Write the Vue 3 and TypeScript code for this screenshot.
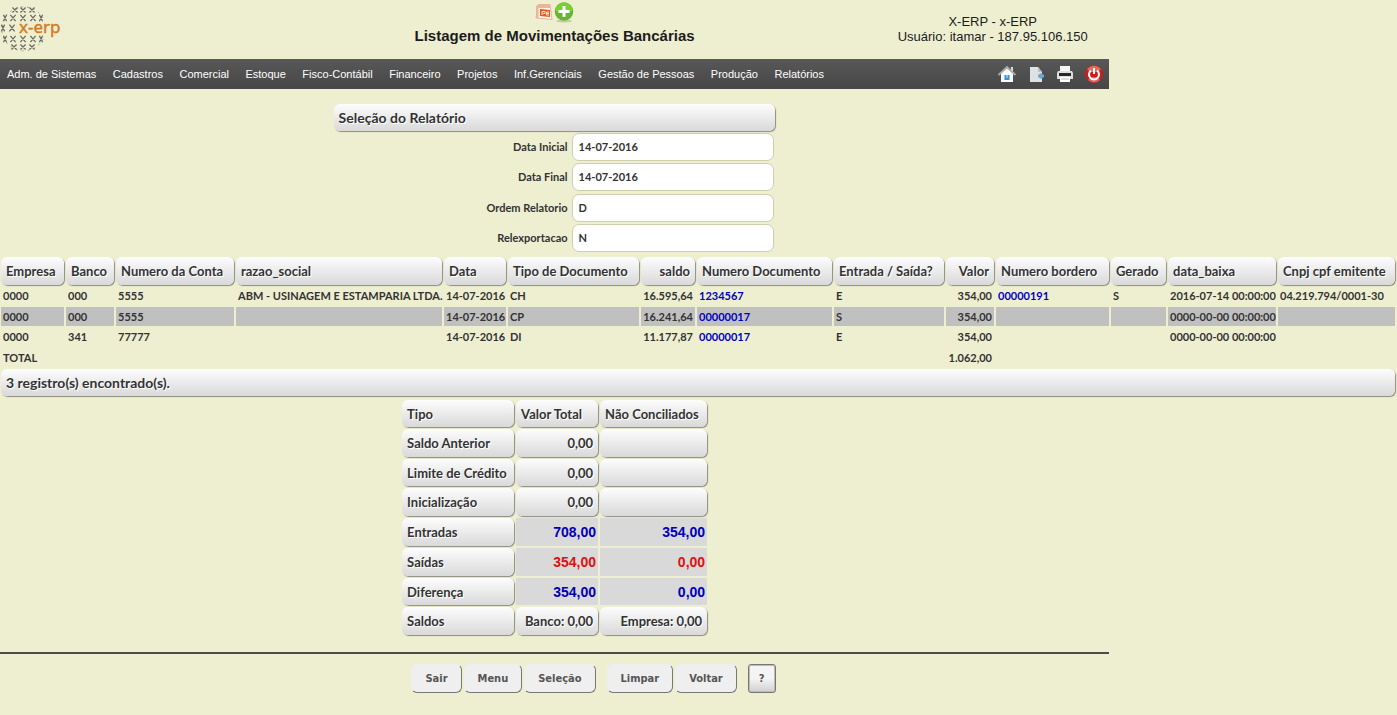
<script setup lang="ts">
interface Field { id: string; label: string; value: string }
interface Column { label: string; width: number; right?: boolean; link?: boolean }
interface Summary { label: string; total: string; pending: string; kind: string }

const menu: string[] = ['Adm. de Sistemas', 'Cadastros', 'Comercial', 'Estoque', 'Fisco-Contábil', 'Financeiro', 'Projetos', 'Inf.Gerenciais', 'Gestão de Pessoas', 'Produção', 'Relatórios']

const fields: Field[] = [
  { id: 'data-inicial', label: 'Data Inicial', value: '14-07-2016' },
  { id: 'data-final', label: 'Data Final', value: '14-07-2016' },
  { id: 'ordem', label: 'Ordem Relatorio', value: 'D' },
  { id: 'relexportacao', label: 'Relexportacao', value: 'N' },
]

const columns: Column[] = [
  { label: 'Empresa', width: 63 },
  { label: 'Banco', width: 48 },
  { label: 'Numero da Conta', width: 118 },
  { label: 'razao_social', width: 206 },
  { label: 'Data', width: 62 },
  { label: 'Tipo de Documento', width: 131 },
  { label: 'saldo', width: 54, right: true },
  { label: 'Numero Documento', width: 135, link: true },
  { label: 'Entrada / Saída?', width: 110 },
  { label: 'Valor', width: 48, right: true },
  { label: 'Numero bordero', width: 113, link: true },
  { label: 'Gerado', width: 55 },
  { label: 'data_baixa', width: 108 },
  { label: 'Cnpj cpf emitente', width: 117 },
]

const rows: string[][] = [
  ['0000', '000', '5555', 'ABM - USINAGEM E ESTAMPARIA LTDA.', '14-07-2016', 'CH', '16.595,64', '1234567', 'E', '354,00', '00000191', 'S', '2016-07-14 00:00:00', '04.219.794/0001-30'],
  ['0000', '000', '5555', '', '14-07-2016', 'CP', '16.241,64', '00000017', 'S', '354,00', '', '', '0000-00-00 00:00:00', ''],
  ['0000', '341', '77777', '', '14-07-2016', 'DI', '11.177,87', '00000017', 'E', '354,00', '', '', '0000-00-00 00:00:00', ''],
  ['TOTAL', '', '', '', '', '', '', '', '', '1.062,00', '', '', '', ''],
]

const summary: Summary[] = [
  { label: 'Saldo Anterior', total: '0,00', pending: '', kind: 'box' },
  { label: 'Limite de Crédito', total: '0,00', pending: '', kind: 'box' },
  { label: 'Inicialização', total: '0,00', pending: '', kind: 'box' },
  { label: 'Entradas', total: '708,00', pending: '354,00', kind: 'amount blue' },
  { label: 'Saídas', total: '354,00', pending: '0,00', kind: 'amount red' },
  { label: 'Diferença', total: '354,00', pending: '0,00', kind: 'amount blue' },
  { label: 'Saldos', total: 'Banco: 0,00', pending: 'Empresa: 0,00', kind: 'box' },
]

const navigation: string[] = ['Sair', 'Menu', 'Seleção']
const actions: string[] = ['Limpar', 'Voltar']

// Small crosses laid on a sphere: rows of [y, half height, x positions]
const globe: [number, number, number[]][] = [
  [6, 2.5, [15, 23, 32]],
  [14, 3.2, [5, 13, 23, 33, 41]],
  [24, 3.4, [3, 12]],
  [35, 3.2, [5, 13, 23, 33, 41]],
  [43, 2.5, [14, 23, 32]],
]
const crosses = globe.flatMap(([y, h, xs]) => xs.map((x) => {
  const w = Math.abs(x - 23) > 14 ? 1.6 : 2.6
  return `M${x - w} ${y - h}L${x + w} ${y + h}M${x + w} ${y - h}L${x - w} ${y + h}`
})).join('')
</script>

<template>
  <div class="page">
    <header class="top">
      <div class="logo">
        <svg width="64" height="50" viewBox="0 0 64 50" role="img" aria-label="x-erp">
          <path d="M43 14A22 22 0 0 0 6 12A22 22 0 0 0 6 38A22 22 0 0 0 44 33" fill="none" stroke="#a3a396" stroke-dasharray="2 4" />
          <path :d="crosses" stroke="#6b6b64" stroke-width="1.3" fill="none" />
          <text x="19" y="29" class="brand">x-erp</text>
        </svg>
      </div>
      <div class="heading">
        <div class="shortcuts">
          <a href="#" aria-label="Exportar">
            <svg width="18" height="20" viewBox="0 0 18 20">
              <path d="M3 3.500L15 3.500L17 18.500L1 17Z" fill="#fff4ea" stroke="#e9b49c" />
              <path d="M1 5V17H3.500V7H15V4H3Z" fill="#efb398" />
              <path d="M5 8L15 9V16L5 15Z" fill="#dc5b25" />
              <path d="M7 14V10.500H10V12.500H8M14 11H11.500V14H14M11.500 12.500H14" stroke="#ffe5d3" fill="none" />
            </svg>
          </a>
          <a href="#" aria-label="Adicionar">
            <svg width="20" height="22" viewBox="0 0 20 22">
              <ellipse cx="10" cy="20" rx="8" ry="1.5" fill="#c7c9ac" />
              <circle cx="10" cy="10.500" r="9.300" fill="#65b82e" />
              <path d="M1.500 10A8.500 8.500 0 0 1 18.500 10Q10 14 1.500 10Z" fill="#7bce30" />
              <path d="M10 5V16M4.500 10.500H15.500" stroke="#fff" stroke-width="3" />
            </svg>
          </a>
        </div>
        <h1>Listagem de Movimentações Bancárias</h1>
      </div>
      <div class="user">
        <div>X-ERP - x-ERP</div>
        <div>Usuário: itamar - 187.95.106.150</div>
      </div>
    </header>

    <nav class="bar">
      <ul class="menu">
        <li v-for="item in menu" :key="item"><a href="#">{{ item }}</a></li>
      </ul>
      <div class="tools">
        <a href="#" aria-label="Início">
          <svg width="20" height="20" viewBox="0 0 20 20">
            <path d="M14 3H16V8H14Z" fill="#ddd" />
            <path d="M4 9L10 4L16 9V18H4Z" fill="#fafafa" />
            <path d="M1.500 11L10 3L18.500 11" fill="none" stroke="#a8aaac" stroke-width="1.800" />
            <path d="M7.500 11H12.500V16H7.500Z" fill="#3b8ed0" />
            <path d="M10 11V14" stroke="#cce8fb" />
          </svg>
        </a>
        <a href="#" aria-label="Novo documento">
          <svg width="20" height="20" viewBox="0 0 20 20">
            <path d="M4 3H12L16 8V18H4Z" fill="#dfe2e4" />
            <path d="M12 3V8H16Z" fill="#b9bec2" />
            <path d="M12 11L15 9L18 11V13L15 15L12 13Z" fill="#6ba7d0" />
          </svg>
        </a>
        <a href="#" aria-label="Imprimir">
          <svg width="20" height="20" viewBox="0 0 20 20">
            <rect x="5" y="2" width="10" height="6" fill="#f7f7f7" />
            <path d="M3 7H17L18 9V15H2V9Z" fill="#dedede" />
            <path d="M4 9H16V12H4Z" fill="#252729" />
            <path d="M5 13H15V18H5Z" fill="#fff" />
            <path d="M6 15H14" stroke="#bbb" />
          </svg>
        </a>
        <a href="#" aria-label="Desligar">
          <svg width="20" height="20" viewBox="0 0 20 20">
            <circle cx="10" cy="10" r="9" fill="#c7201c" />
            <path d="M3 5Q10 -2 17 5L14 8H6Z" fill="#e36a62" />
            <path d="M4 16Q10 21 16 16L13 13H7Z" fill="#e0605a" />
            <path d="M7 6.500A5 5 0 1 0 13 6.500M10 4V10" fill="none" stroke="#fff" stroke-width="2" />
          </svg>
        </a>
      </div>
    </nav>

    <form class="selection" @submit.prevent>
      <h2 class="box">Seleção do Relatório</h2>
      <div v-for="field in fields" :key="field.id" class="field">
        <label :for="field.id">{{ field.label }}</label>
        <input :id="field.id" type="text" :value="field.value" />
      </div>
    </form>

    <table class="listing">
      <colgroup>
        <col v-for="column in columns" :key="column.label" :style="{ width: column.width + 'px' }" />
      </colgroup>
      <thead>
        <tr>
          <th v-for="column in columns" :key="column.label" class="box" :class="{ right: column.right }">{{ column.label }}</th>
        </tr>
      </thead>
      <tbody>
        <tr v-for="(row, r) in rows" :key="r" :class="{ shaded: r === 1 }">
          <td v-for="(cell, c) in row" :key="c" :class="{ right: columns[c].right }">
            <a v-if="columns[c].link && cell" href="#">{{ cell }}</a>
            <template v-else>{{ cell }}</template>
          </td>
        </tr>
      </tbody>
      <tfoot>
        <tr><td class="box" :colspan="columns.length">3 registro(s) encontrado(s).</td></tr>
      </tfoot>
    </table>

    <div class="lower">
      <table class="summary">
        <colgroup><col class="kind" /><col class="total" /><col class="pending" /></colgroup>
        <tbody>
          <tr>
            <th class="box">Tipo</th>
            <th class="box">Valor Total</th>
            <th class="box">Não Conciliados</th>
          </tr>
          <tr v-for="line in summary" :key="line.label">
            <th class="box">{{ line.label }}</th>
            <td class="right" :class="line.kind">{{ line.total }}</td>
            <td class="right" :class="line.kind">{{ line.pending }}</td>
          </tr>
        </tbody>
      </table>
    </div>

    <footer class="commands">
      <div class="group">
        <button v-for="name in navigation" :key="name" type="button">{{ name }}</button>
      </div>
      <div class="group">
        <button v-for="name in actions" :key="name" type="button">{{ name }}</button>
      </div>
      <button type="button" class="help">?</button>
    </footer>
  </div>
</template>

<style>
body {
  margin: 0;
  background: #eeefd1;
}
</style>

<style scoped>
.page {
  color: #333;
  font: bold 11px/18px Lato, "Liberation Sans", sans-serif;
}
a {
  text-decoration: none;
}
.top,
.bar,
.lower,
.commands {
  width: 79.4%;
  box-sizing: border-box;
}
.top {
  display: grid;
  grid-template-columns: 21% 58% 21%;
  height: 59px;
  color: #1c1c1c;
  font-family: "Liberation Sans", Arial, sans-serif;
}
.logo {
  padding-top: 4px;
}
.brand {
  fill: #d47a20;
  stroke: #d47a20;
  stroke-width: 0.4px;
  font: 17px "Noto Sans", sans-serif;
}
.heading {
  text-align: center;
}
.shortcuts {
  display: flex;
  justify-content: center;
  gap: 1px;
  height: 24px;
  padding-top: 1px;
  box-sizing: border-box;
}
h1 {
  margin: 0;
  font-size: 15px;
  line-height: 24px;
}
.user {
  padding-top: 14px;
  font-size: 13px;
  font-weight: normal;
  line-height: 15px;
  text-align: center;
  white-space: nowrap;
}
.bar {
  display: flex;
  justify-content: space-between;
  align-items: center;
  height: 30px;
  padding: 0 5px 0 7px;
  background: linear-gradient(#585858, #464646);
}
.menu {
  display: flex;
  justify-content: space-between;
  width: 817px;
  margin: 0;
  padding: 0;
  list-style: none;
  font: 11px/30px "Liberation Sans", Arial, sans-serif;
}
.menu a {
  color: #fff;
}
.tools {
  display: flex;
  gap: 9px;
}
.tools a,
.shortcuts a,
svg {
  display: block;
}
.box {
  border-radius: 6px;
  background: linear-gradient(#fdfdfd, #d9d9d9);
  box-shadow: 1px 1px 1px #8c8c80;
  color: #333;
  font-size: 13px;
  font-weight: bold;
  text-shadow: 1px 1px 0 #fff;
}
.selection {
  width: 441px;
  margin: 15px auto 0 calc(39.7% - 221px);
}
h2.box {
  height: 27px;
  margin: 0 0 2px;
  padding-left: 5px;
  font-size: 14px;
  line-height: 27px;
}
.field {
  display: flex;
  justify-content: flex-end;
  align-items: center;
  gap: 4px;
  height: 28px;
  margin: 0 1px 3px 0;
}
.field:nth-child(even) {
  margin-bottom: 2px;
}
.field input {
  width: 202px;
  height: 28px;
  box-sizing: border-box;
  padding: 0 6px 2px;
  border: 1px solid #cfcfb0;
  border-radius: 7px;
  background: #fff;
  color: #333;
  font: inherit;
}
table {
  border-collapse: separate;
  border-spacing: 2px;
  table-layout: fixed;
}
th,
td {
  padding: 0 2px;
  text-align: left;
  white-space: nowrap;
}
.listing {
  width: calc(100% + 1px);
  margin: 1px 0 0 -1px;
}
th.box,
td.box {
  height: 27px;
  padding: 0 5px;
}
.listing thead th.box {
  height: 28px;
}
.listing tfoot td.box {
  font-size: 14px;
}
.listing tbody tr {
  height: 18px;
}
.listing tbody tr:nth-child(even) {
  height: 19px;
}
.listing a {
  color: #0000c0;
}
.shaded td {
  background: #c0c0c0;
}
.right {
  text-align: right;
}
.lower {
  padding-bottom: 15px;
  border-bottom: 2px solid #4b4b4b;
}
.summary {
  width: 309px;
  margin: 0 auto;
}
.kind {
  width: 112px;
}
.total {
  width: 82px;
}
.pending {
  width: 107px;
}
.summary tr:nth-child(even) .box,
.summary tr:nth-child(even) td,
.summary tr:nth-child(5) .box {
  height: 28px;
}
.amount {
  background: #d9d9d9;
  font: bold 14px "Liberation Sans", Arial, sans-serif;
}
.blue {
  color: #0000b8;
}
.red {
  color: #e01010;
}
.commands {
  display: flex;
  justify-content: center;
  gap: 11px;
  padding: 10px 0 0 78px;
}
.group {
  display: flex;
  gap: 2px;
}
button {
  height: 29px;
  padding: 0 13px;
  border: 1px solid #eee;
  border-right-color: #777;
  border-bottom-color: #777;
  border-radius: 6px;
  background: #efefef;
  color: #555;
  font: bold 11px "DejaVu Sans Condensed", "Noto Sans", sans-serif;
}
.help {
  width: 28px;
  padding: 0;
  border: 1px solid #777;
  border-radius: 3px;
  background: linear-gradient(#f4f4f4 50%, #d0d0d0);
  box-shadow: inset 0 0 0 1px #bbb;
}
</style>
